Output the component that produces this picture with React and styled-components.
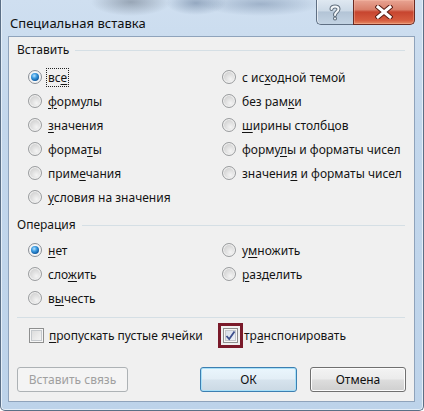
import React from 'react'
import styled, { createGlobalStyle } from 'styled-components'

const GlobalStyle = createGlobalStyle`
  html, body { margin: 0; padding: 0; background: #ffffff; }
  body {
    font-family: "Noto Sans", "Open Sans", sans-serif;
    font-size: 12px;
    color: #141414;
  }
`

const pasteLeft = [
    { text: 'все', u: 2, checked: true, focus: true },
    { text: 'формулы', u: 0 },
    { text: 'значения', u: 0 },
    { text: 'форматы', u: 5 },
    { text: 'примечания', u: 4 },
    { text: 'условия на значения', u: 0 },
    { text: 'с исходной темой', u: 4 },
    { text: 'без рамки', u: 7 },
    { text: 'ширины столбцов', u: 0 },
    { text: 'формулы и форматы чисел', u: 5 },
    { text: 'значения и форматы чисел', u: 7 },
]

const operations = [
    { text: 'нет', u: 0, checked: true },
    { text: 'сложить', u: 3 },
    { text: 'вычесть', u: 1 },
    { text: 'умножить', u: 1 },
    { text: 'разделить', u: 0 },
]

// underline the access key letter
function Mnemonic({ text, u }) {
    if (u === undefined || u < 0) return text
    return (
        <>
            {text.slice(0, u)}
            <Key>{text[u]}</Key>
            {text.slice(u + 1)}
        </>
    )
}

function HelpIcon() {
    return (
        <svg width="14" height="17" viewBox="0 0 14 17">
            <path d="M3.5 5 C3.5 1.5, 10.5 1.5, 10.5 5 C10.5 8, 7 8, 7 11" fill="none" stroke="#5d6b7a" strokeWidth="4" strokeLinecap="round" />
            <path d="M3.5 5 C3.5 1.5, 10.5 1.5, 10.5 5 C10.5 8, 7 8, 7 11" fill="none" stroke="#f4f7fa" strokeWidth="2" strokeLinecap="round" />
            <circle cx="7" cy="14.5" r="2" fill="#5d6b7a" />
            <circle cx="7" cy="14.5" r="1" fill="#f4f7fa" />
        </svg>
    )
}

function CloseIcon() {
    return (
        <svg width="18" height="14" viewBox="0 0 18 14">
            <path d="M3 2 L15 12 M15 2 L3 12" stroke="#5a1d14" strokeWidth="5" strokeLinecap="square" />
            <path d="M3 2 L15 12 M15 2 L3 12" stroke="#ffffff" strokeWidth="3" strokeLinecap="square" />
        </svg>
    )
}

export default function App() {
    return (
        <>
            <GlobalStyle />
            <Window>
                <TitleBar>
                    <Title>Специальная вставка</Title>
                    <Captions>
                        <HelpButton><HelpIcon /></HelpButton>
                        <CloseButton><CloseIcon /></CloseButton>
                    </Captions>
                </TitleBar>
                <Client>
                    <GroupHeader>
                        <span>Вставить</span>
                        <Rule />
                    </GroupHeader>
                    <RadioGrid $rows={6} $top={7}>
                        {pasteLeft.map((item) => (
                            <Option key={item.text}>
                                <Radio $checked={item.checked} />
                                <Label $focus={item.focus}>
                                    <Mnemonic text={item.text} u={item.u} />
                                </Label>
                            </Option>
                        ))}
                    </RadioGrid>
                    <GroupHeader $top={8}>
                        <span>Операция</span>
                        <Rule />
                    </GroupHeader>
                    <RadioGrid $rows={3} $top={5}>
                        {operations.map((item) => (
                            <Option key={item.text}>
                                <Radio $checked={item.checked} />
                                <Label>
                                    <Mnemonic text={item.text} u={item.u} />
                                </Label>
                            </Option>
                        ))}
                    </RadioGrid>
                    <Divider />
                    <CheckRow>
                        <CheckItem>
                            <CheckBox />
                            <span><Mnemonic text="пропускать пустые ячейки" u={0} /></span>
                        </CheckItem>
                        <CheckItem $gap={1}>
                            <Highlight>
                                <CheckBox $checked>
                                    <svg width="11" height="11" viewBox="0 0 11 11">
                                        <path d="M1.5 6 L4.2 9 L9.5 1.5" fill="none" stroke="#3d4f8c" strokeWidth="1.8" />
                                    </svg>
                                </CheckBox>
                            </Highlight>
                            <span><Mnemonic text="транспонировать" u={2} /></span>
                        </CheckItem>
                    </CheckRow>
                    <ButtonRow>
                        <Button $width={111} disabled>Вставить связь</Button>
                        <Spacer />
                        <Button $width={97} $default>ОК</Button>
                        <Button $width={96}>Отмена</Button>
                    </ButtonRow>
                </Client>
            </Window>
        </>
    )
}

const Window = styled.div`
    box-sizing: border-box;
    width: 424px;
    height: 411px;
    display: flex;
    flex-direction: column;
    border: 1px solid #5b6f86;
    border-top: none;
    border-radius: 0 0 5px 5px;
    padding: 0 8px 8px 7px;
    background:
        radial-gradient(ellipse 40px 14px at 130px 2px, rgba(70, 80, 95, 0.4), transparent),
        radial-gradient(ellipse 30px 12px at 195px 3px, rgba(60, 85, 120, 0.4), transparent),
        radial-gradient(ellipse 60px 12px at 260px 4px, rgba(70, 95, 130, 0.35), transparent),
        linear-gradient(180deg, #cfdff0 0%, #c3d7ec 30%, #bdd3ea 100%);
    box-shadow: inset 1px 0 0 #e4eef8, inset -1px 0 0 #e4eef8, inset 0 -1px 0 #e4eef8;
`

const TitleBar = styled.div`
    height: 36px;
    display: flex;
    align-items: flex-start;
`

const Title = styled.div`
    font-size: 13px;
    line-height: 16px;
    margin: 15px 0 0 2px;
    color: #101010;
`

const Captions = styled.div`
    margin-left: auto;
    display: flex;
`

const CaptionButton = styled.div`
    box-sizing: border-box;
    height: 25px;
    display: flex;
    align-items: center;
    justify-content: center;
    border: 1px solid #5f6f83;
    border-top: none;
`

const HelpButton = styled(CaptionButton)`
    width: 37px;
    border-right: none;
    border-radius: 0 0 0 5px;
    background: linear-gradient(180deg, #dfe8f1 0%, #ccd9e6 45%, #b3c4d6 50%, #c3d3e3 100%);
    box-shadow: inset 1px 0 0 rgba(255, 255, 255, 0.6);
`

const CloseButton = styled(CaptionButton)`
    width: 62px;
    border-radius: 0 0 5px 0;
    border-color: #6b2a22;
    background: linear-gradient(180deg, #e8a493 0%, #d9806b 40%, #c7452f 50%, #d65c3f 85%, #e48a63 100%);
    box-shadow: inset 0 0 0 1px rgba(255, 200, 180, 0.35);
`

const Client = styled.div`
    box-sizing: border-box;
    height: 366px;
    display: flex;
    flex-direction: column;
    background: #f0f0f0;
    border: 1px solid #8fa3bb;
    padding: 5px 9px 9px 8px;
`

const GroupHeader = styled.div`
    height: 16px;
    line-height: 16px;
    display: flex;
    align-items: center;
    gap: 6px;
    margin-top: ${(p) => p.$top || 0}px;
`

const Rule = styled.div`
    flex: 1;
    height: 1px;
    background: #d5dfe5;
`

const RadioGrid = styled.div`
    display: grid;
    grid-template-columns: 194px 1fr;
    grid-template-rows: repeat(${(p) => p.$rows}, 24px);
    grid-auto-flow: column;
    margin-top: ${(p) => p.$top}px;
`

const Option = styled.div`
    display: flex;
    align-items: center;
    gap: 6px;
    padding-left: 11px;
    white-space: nowrap;
`

const Radio = styled.span`
    position: relative;
    box-sizing: border-box;
    width: 14px;
    height: 14px;
    flex: none;
    border-radius: 50%;
    border: 1px solid #9b9d9f;
    background: radial-gradient(circle at 62% 68%, #f4f4f4 0%, #dedede 45%, #c6c6c6 100%);
    box-shadow: inset 0 0 0 1px #f2f2f2;

    ${(p) => p.$checked && `
        background: #f6f8fa;
        border-color: #8a8f96;
        &::after {
            content: '';
            position: absolute;
            left: 2px;
            top: 2px;
            width: 8px;
            height: 8px;
            border-radius: 50%;
            background: radial-gradient(circle at 40% 35%, #b9e2ff 0%, #3b9be0 35%, #135fa6 70%, #0e3e70 100%);
        }
    `}
`

const Label = styled.span`
    line-height: 15px;
    outline: ${(p) => (p.$focus ? '1px dotted #222' : 'none')};
    outline-offset: 1px;
`

const Key = styled.u`
    text-decoration: underline;
    text-underline-offset: 2px;
`

const Divider = styled.div`
    height: 1px;
    background: #d5dfe5;
    margin-top: 7px;
`

const CheckRow = styled.div`
    display: grid;
    grid-template-columns: 194px 1fr;
    height: 25px;
    margin-top: 5px;
`

const CheckItem = styled.div`
    display: flex;
    align-items: center;
    gap: ${(p) => (p.$gap !== undefined ? p.$gap : 5)}px;
    padding-left: ${(p) => (p.$gap !== undefined ? 7 : 12)}px;
    white-space: nowrap;
`

const Highlight = styled.div`
    box-sizing: border-box;
    width: 25px;
    height: 25px;
    border: 3px solid #7a1a2a;
    display: flex;
    align-items: center;
    justify-content: center;
`

const CheckBox = styled.span`
    box-sizing: border-box;
    width: 15px;
    height: 15px;
    flex: none;
    display: flex;
    align-items: center;
    justify-content: center;
    border: 1px solid #8e8f8f;
    background: linear-gradient(135deg, #d8d8d8 0%, #ececec 60%, #f8f8f8 100%);
    box-shadow: inset 0 0 0 1px #f6f6f6, inset 0 0 0 2px #c4c8cc;

    ${(p) => p.$checked && `
        background: linear-gradient(135deg, #d4dbe6 0%, #e6ebf2 60%, #f4f6f9 100%);
    `}
`

const ButtonRow = styled.div`
    display: flex;
    gap: 13px;
    margin-top: 19px;
    margin-right: -1px;
`

const Spacer = styled.div`
    flex: 1;
`

const Button = styled.button`
    box-sizing: border-box;
    width: ${(p) => p.$width}px;
    height: 25px;
    padding: 0;
    font-family: inherit;
    font-size: 12px;
    color: #111;
    border-radius: 3px;
    border: 1px solid #707070;
    background: linear-gradient(180deg, #f3f3f3 0%, #ebebeb 48%, #dddddd 52%, #cfcfcf 100%);
    box-shadow: inset 0 0 0 1px #fcfcfc;

    ${(p) => p.$default && `
        border-color: #3c7fb1;
        background: linear-gradient(180deg, #eaf6fd 0%, #e3eef6 48%, #d6e3ed 52%, #cbd9e4 100%);
        box-shadow: inset 0 0 0 1px #a8e0f8;
    `}

    &:disabled {
        color: #a0a0a0;
        border-color: #adb2b5;
        background: #f4f4f4;
        box-shadow: none;
    }
`
